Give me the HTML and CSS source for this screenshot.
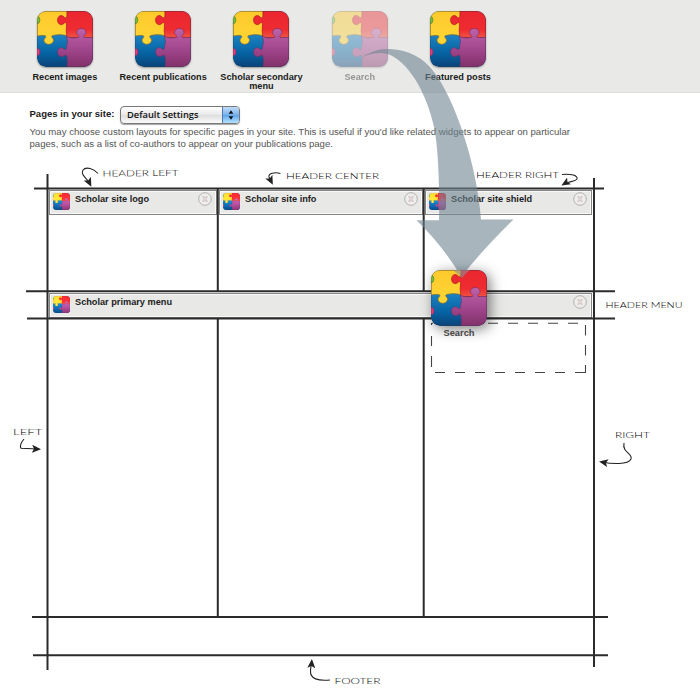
FILE: index.html
```
<!DOCTYPE html>
<html lang="en">
<head>
<meta charset="utf-8">
<title>Scholar layout settings</title>
<link rel="stylesheet" href="styles.css">
</head>
<body>
<svg class="defs" aria-hidden="true">
  <defs>
    <linearGradient id="gb" x1="0" y1="0" x2="0" y2="1"><stop offset=".4" stop-color="#1f84c4"/><stop offset=".75" stop-color="#0563a3"/><stop offset="1" stop-color="#0b4278"/></linearGradient>
    <linearGradient id="gr" x1="0" y1="0" x2="0" y2="1"><stop offset="0" stop-color="#ea2630"/><stop offset=".7" stop-color="#ee2c30"/><stop offset="1" stop-color="#f05243"/></linearGradient>
    <linearGradient id="gp" x1="0" y1="0" x2="0" y2="1"><stop offset="0" stop-color="#bd62a8"/><stop offset=".5" stop-color="#a44890"/><stop offset="1" stop-color="#813069"/></linearGradient>
    <linearGradient id="gy" x1="0" y1="0" x2="0" y2="1"><stop offset="0" stop-color="#fdc92c"/><stop offset="1" stop-color="#ffd634"/></linearGradient>
    <clipPath id="tile"><rect width="56" height="56" rx="8.5"/></clipPath>
    <symbol id="puzzle" viewBox="0 0 56 56">
      <g clip-path="url(#tile)">
        <rect width="56" height="56" fill="url(#gb)"/>
        <path d="M0 0H30V24.500Q22 22.500 15.500 24.500C13 26 16.800 27 16.500 29.500C15.500 34.500 8 34.500 7 29.500C7 27 10.500 26 8 24.500Q5 24 0 25Z" fill="url(#gy)" stroke="#9a6b16" stroke-width=".6"/>
        <path d="M30 0H56V26.500H30Q28.500 20 29.500 14C29.500 11.500 28.500 10.500 27 12.500C23 15.500 20.500 12 20.500 9C20.500 5 24.500 3 27 6C28.500 7.500 30 7 30 5Z" fill="url(#gr)" stroke="#a91522" stroke-width=".6"/>
        <path d="M29.500 25.500Q35 28 41 26.500C44 26 39.500 24 39.500 21.500C39.500 16 49 16 49 21.500C49 24 44.500 26 48 26.500L56 26.500V56H30Q31 51 30 46C29.500 43.500 28.500 44 27 45C22.500 47 20.500 43.500 20.500 41C20.500 37 24.500 35.500 27 38C28.500 39.500 30 38 29.500 36Q31.500 30 29.500 25.500Z" fill="url(#gp)" stroke="#75305f" stroke-width=".6"/>
        <circle cx="-1" cy="9" r="4" fill="#79bd38" stroke="#557f27" stroke-width=".6"/>
        <circle cx="-1" cy="41" r="4" fill="#e83c7d" stroke="#87285a" stroke-width=".6"/>
        <rect x=".4" y=".4" width="55.200" height="55.200" rx="8.200" fill="none" stroke="#303b4c" stroke-opacity=".3"/>
      </g>
    </symbol>
    <symbol id="close" viewBox="0 0 14 14"><circle cx="7" cy="7" r="6.300" fill="#eeeeed" stroke="#b5afaf"/><path d="M4.800 4.300L9.200 9.700M9.200 4.300L4.800 9.700" stroke="#cdbaba" stroke-width="1.800" fill="none"/><path d="M4.800 4.300L9.200 9.700M9.200 4.300L4.800 9.700" stroke="#f3eded" stroke-width=".6" fill="none"/></symbol>
    <marker id="head" viewBox="0 0 9 8" refX="6" refY="4" markerWidth="9" markerHeight="8" markerUnits="userSpaceOnUse" orient="auto"><path d="M0 0L9 4L0 8L2 4Z" fill="#222"/></marker>
  </defs>
</svg>

<header class="palette">
  <div class="widget"><svg class="tile"><use href="#puzzle"/></svg><span>Recent images</span></div>
  <div class="widget"><svg class="tile"><use href="#puzzle"/></svg><span>Recent publications</span></div>
  <div class="widget"><svg class="tile"><use href="#puzzle"/></svg><span>Scholar secondary<br>menu</span></div>
  <div class="widget faded"><svg class="tile"><use href="#puzzle"/></svg><span>Search</span></div>
  <div class="widget"><svg class="tile"><use href="#puzzle"/></svg><span>Featured posts</span></div>
</header>

<main>
  <section class="settings">
    <div class="chooser">
      <span class="chooser-label">Pages in your site:</span>
      <button class="select"><span>Default Settings</span><svg class="stepper" viewBox="0 0 17 16"><path d="M8.500 3L11 6.800H6ZM8.500 13L11 9.200H6Z" fill="#111"/></svg></button>
    </div>
    <p>You may choose custom layouts for specific pages in your site. This is useful if you'd like related widgets to appear on particular<br>pages, such as a list of co-authors to appear on your publications page.</p>
  </section>

  <section class="layout">
    <div class="region"><div class="card"><svg class="mini"><use href="#puzzle"/></svg><b>Scholar site logo</b><svg class="close"><use href="#close"/></svg></div></div>
    <div class="region"><div class="card"><svg class="mini"><use href="#puzzle"/></svg><b>Scholar site info</b><svg class="close"><use href="#close"/></svg></div></div>
    <div class="region"><div class="card"><svg class="mini"><use href="#puzzle"/></svg><b>Scholar site shield</b><svg class="close"><use href="#close"/></svg></div></div>
    <div class="region menu"><div class="card"><svg class="mini"><use href="#puzzle"/></svg><b>Scholar primary menu</b><svg class="close"><use href="#close"/></svg></div></div>
  </section>
</main>

<svg class="overlay" viewBox="0 0 700 697">
  <g class="rules">
    <path d="M34 188.600H604M26 291.200H615M27 318.400H615M32 617H608M33 655.200H608"/>
    <path d="M47.500 174V670M594 178V667M217.800 189V291M217.800 318V617M423.700 189V291M423.700 318V617"/>
  </g>
  <g class="dashes">
    <path d="M431.500 323.300H433M448 323.300H458M468 323.300H478M488 323.300H498M508 323.300H518M528 323.300H538M548 323.300H558M568 323.300H578"/>
    <path d="M435 372.500H445M455 372.500H465M475 372.500H485M495 372.500H505M515 372.500H525M535 372.500H545M555 372.500H565M575 372.500H585.500V365"/>
    <path d="M585.500 325V335.500M585.500 345V355.500M431.500 323V325M431.500 336V346M431.500 356V367"/>
  </g>
  <g class="notes">
    <text x="102.500" y="176.500" textLength="76" lengthAdjust="spacingAndGlyphs" transform="rotate(-.5 103 176)">HEADER LEFT</text>
    <text x="286" y="179" textLength="93" lengthAdjust="spacingAndGlyphs">HEADER CENTER</text>
    <text x="476" y="177.500" textLength="83" lengthAdjust="spacingAndGlyphs">HEADER RIGHT</text>
    <text x="605.500" y="308" textLength="77" lengthAdjust="spacingAndGlyphs">HEADER MENU</text>
    <text x="13" y="435" textLength="29.500" lengthAdjust="spacingAndGlyphs">LEFT</text>
    <text x="615" y="437.500" textLength="35" lengthAdjust="spacingAndGlyphs">RIGHT</text>
    <text x="334.500" y="684" textLength="46" lengthAdjust="spacingAndGlyphs">FOOTER</text>
  </g>
  <g class="pointers">
    <path d="M98 173.500C94 169 86 166 83 170C80 175 87 178 90 184"/>
    <path d="M280.500 173.500C275 172 268 173 269 177Q270 179 271.500 182"/>
    <path d="M562 174.500C571 173.500 578 175.500 577 179C575 182 569 181 564 184"/>
    <path d="M24 439Q19 445 21 448.200L38 449"/>
    <path d="M624 443C622 453 633 453 631 459C628 465 612 464 602 462"/>
    <path d="M330 680C318 681 310 679 310.500 671C310.500 667 311.500 665 311.700 662"/>
  </g>
  <path class="swoosh" d="M362.500 57C370 52 379 48.500 390 49C409 50 424 58 434 72C454 98 477 163 481 219.500H513.500Q481 251 461.500 277Q443 246 416.500 220.300H439C440 188 438 147 434.500 129C429 103 416 71 394 57C386 51.500 374 52 362.500 57Z"/>
</svg>

<div class="dragged"><svg class="tile"><use href="#puzzle"/></svg><span>Search</span><svg class="tip" viewBox="0 0 22 10"><path d="M3 0H20Q15 4 12 8Q8 4 3 0Z"/></svg></div>
</body>
</html>
```
FILE: styles.css
```
* { box-sizing: border-box; }
body {
  position: relative;
  margin: 0;
  width: 700px;
  height: 697px;
  overflow: hidden;
  background: #fff;
  color: #1c1c1c;
  font-family: "Liberation Sans", Arial, sans-serif;
}
svg { display: block; }
.defs { position: absolute; width: 0; height: 0; }

.palette {
  display: grid;
  grid-template-columns: repeat(5, 98.300px);
  height: 93px;
  padding: 11px 0 0 15.700px;
  background: #e9e9e7;
  border-bottom: 1px solid #dededc;
}
.widget {
  display: flex;
  flex-direction: column;
  align-items: center;
  gap: 6px;
  font-size: 9.200px;
  font-weight: bold;
  line-height: 8.500px;
  text-align: center;
  white-space: nowrap;
}
.tile {
  width: 56px;
  height: 56px;
  border-radius: 9px;
  box-shadow: 0 1px 2px rgba(0, 0, 0, .35);
}
.faded { opacity: .42; }

.settings { height: 97px; padding: 12px 29px 0; }
.chooser { display: flex; align-items: center; gap: 5px; height: 19px; }
.chooser-label { width: 86px; padding: 0 0 3px .500px; font-size: 9.560px; font-weight: bold; white-space: nowrap; }
.select {
  display: flex;
  align-items: center;
  justify-content: space-between;
  width: 120px;
  height: 18px;
  padding: 0 0 0 6px;
  border: 1px solid #777;
  border-radius: 4px;
  overflow: hidden;
  background: linear-gradient(#fff, #e8e8e8 50%, #dedede 51%, #fafafa);
  box-shadow: 0 1px 1px rgba(0, 0, 0, .35);
  color: #111;
  font: 600 9.300px "Open Sans", sans-serif;
  white-space: nowrap;
}
.select span { margin-top: -1px; }
.stepper { width: 17px; height: 16px; background: linear-gradient(#c2dcf7, #78b1eb 50%, #5ea4e8 51%, #b5e2ff); border-left: 1px solid #4e79b5; }
.settings p {
  margin: 2px 0 0 .500px;
  color: #555;
  font-size: 9.600px;
  line-height: 11.700px;
  white-space: nowrap;
}

.layout {
  display: grid;
  grid-template-columns: 170px 206px 169px;
  grid-template-rows: 103px 26px;
  margin-left: 48px;
}
.region { padding: 0 1px 0 .500px; }
.menu { grid-column: 1 / -1; }
.card {
  display: flex;
  align-items: center;
  height: 25px;
  padding: 0 4px 2px 3.500px;
  border: 1px solid #858585;
  box-shadow: inset 0 0 0 1px #f9f9f9;
  background: #e8e8e6;
  font-size: 9.200px;
}
.card b { margin: -6px auto 0 5px; white-space: nowrap; }
.mini { width: 17px; height: 17px; border-radius: 3px; filter: brightness(1.12); }
.close { width: 14px; height: 14px; margin-top: -6px; }

.overlay { position: absolute; inset: 0; width: 700px; height: 697px; }
.rules { fill: none; stroke: #2b2b2b; stroke-width: 2; }
.dashes { fill: none; stroke: #444; stroke-width: 1.100; }
.notes { fill: #000; font: 300 8.500px Lato, sans-serif; }
.pointers { fill: none; stroke: #222; stroke-width: 1.100; }
.pointers path { marker-end: url(#head); }
.swoosh { fill: #6e8491; fill-opacity: .6; }

.dragged {
  position: absolute;
  left: 431px;
  top: 270px;
  width: 56px;
  color: #444;
  font-size: 9.300px;
  font-weight: bold;
  line-height: 10px;
  text-align: center;
}
.dragged .tile { margin-bottom: 2px; box-shadow: 3px 3px 13px rgba(0, 0, 0, .5); }
.tip { position: absolute; left: 19px; top: 0; width: 22px; height: 10px; fill: #8c8f96; fill-opacity: .6; }
```
